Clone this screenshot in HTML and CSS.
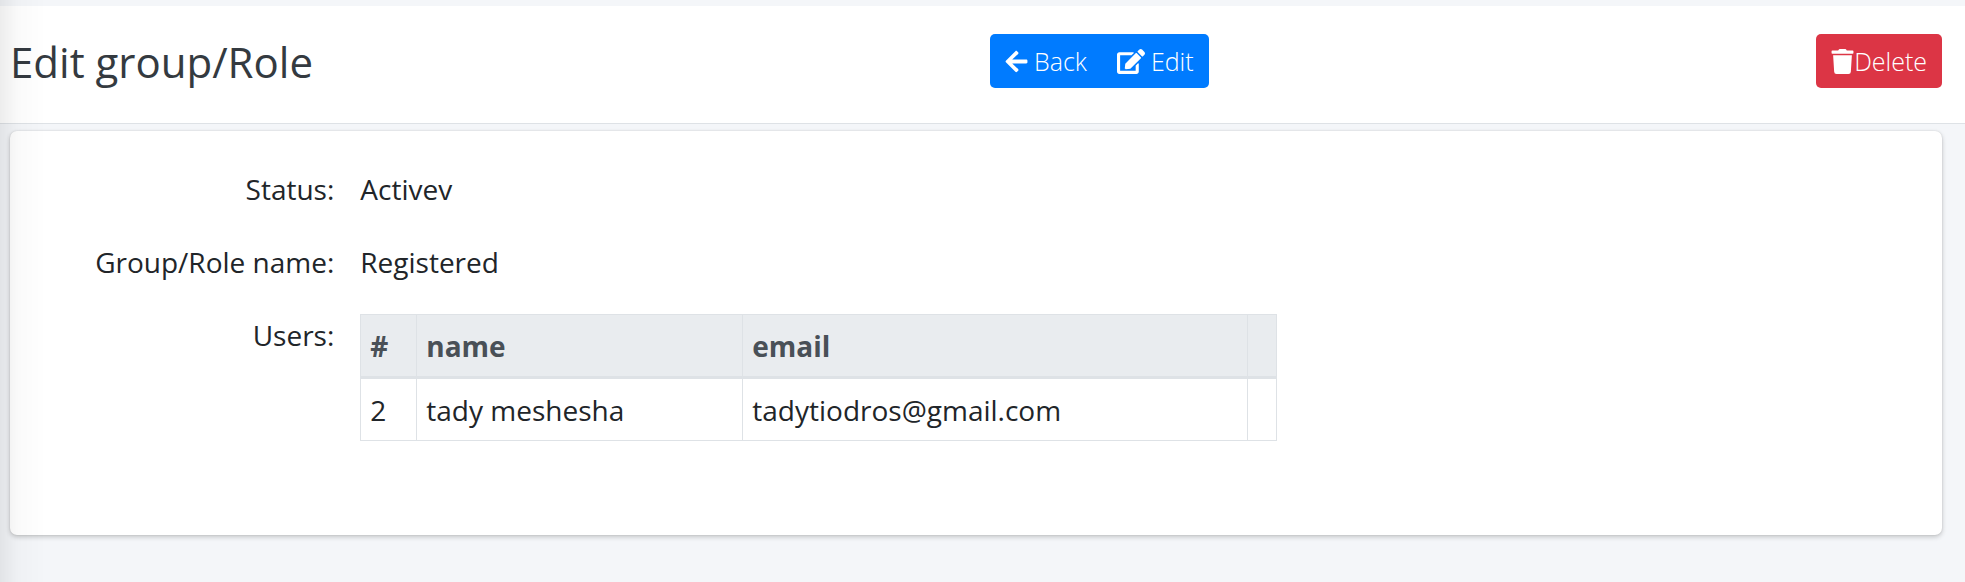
FILE: index.html
```html
<!DOCTYPE html>
<html lang="en">
<head>
<meta charset="utf-8">
<meta name="viewport" content="width=device-width, initial-scale=1">
<title>Edit group/Role</title>
<link rel="stylesheet" href="styles.css">
</head>
<body>
<header class="page-header">
  <h1 class="page-title">Edit group/Role</h1>
  <div class="page-actions">
    <div class="btn-group">
      <button type="button" class="btn btn-primary">
        <svg class="icon icon-arrow" viewBox="0 0 448 512" aria-hidden="true"><path d="M257.500 445.100l-22.200 22.200c-9.400 9.400-24.600 9.400-33.900 0L7 273c-9.400-9.400-9.400-24.600 0-33.900L201.400 44.700c9.400-9.400 24.600-9.400 33.900 0l22.200 22.200c9.500 9.500 9.300 25-.4 34.300L136.600 216H424c13.300 0 24 10.700 24 24v32c0 13.300-10.700 24-24 24H136.600l120.500 114.800c9.800 9.300 10 24.800.4 34.300z"/></svg>
        <span>Back</span>
      </button>
      <button type="button" class="btn btn-primary">
        <svg class="icon icon-edit" viewBox="0 0 576 512" aria-hidden="true"><path d="M402.600 83.200l90.200 90.200c3.800 3.800 3.800 10 0 13.800L274.400 405.600l-92.800 10.300c-12.400 1.400-22.900-9.100-21.500-21.500l10.300-92.800L388.800 83.200c3.800-3.800 10-3.800 13.800 0zm162-22.900l-48.800-48.800c-15.200-15.200-39.900-15.200-55.200 0l-35.400 35.400c-3.800 3.800-3.800 10 0 13.800l90.200 90.200c3.800 3.800 10 3.800 13.800 0l35.400-35.400c15.200-15.300 15.200-40 0-55.200zM384 346.200V448H64V128h229.800c3.200 0 6.200-1.300 8.500-3.500l40-40c7.600-7.600 2.200-20.500-8.500-20.500H48C21.500 64 0 85.500 0 112v352c0 26.500 21.500 48 48 48h352c26.500 0 48-21.500 48-48V306.200c0-10.700-12.900-16-20.500-8.500l-40 40c-2.200 2.300-3.500 5.300-3.500 8.500z"/></svg>
        <span>Edit</span>
      </button>
    </div>
    <button type="button" class="btn btn-danger">
      <svg class="icon icon-trash" viewBox="0 0 448 512" aria-hidden="true"><path d="M432 32H312l-9.400-18.700A24 24 0 0 0 281.100 0H166.800a23.700 23.700 0 0 0-21.400 13.300L136 32H16A16 16 0 0 0 0 48v32a16 16 0 0 0 16 16h416a16 16 0 0 0 16-16V48a16 16 0 0 0-16-16zM32 128l21.200 339a48 48 0 0 0 47.900 45h245.800a48 48 0 0 0 47.900-45L416 128z"/></svg>
      <span>Delete</span>
    </button>
  </div>
</header>
<main class="content">
  <section class="card">
    <dl class="details">
      <dt>Status:</dt>
      <dd>Activev</dd>
      <dt>Group/Role name:</dt>
      <dd>Registered</dd>
      <dt>Users:</dt>
      <dd>
        <table class="users">
          <thead>
            <tr><th class="col-id" scope="col">#</th><th class="col-name" scope="col">name</th><th class="col-email" scope="col">email</th><th></th></tr>
          </thead>
          <tbody>
            <tr><td>2</td><td>tady meshesha</td><td>tadytiodros@gmail.com</td><td></td></tr>
          </tbody>
        </table>
      </dd>
    </dl>
  </section>
</main>
</body>
</html>
```
FILE: styles.css
```css
* {
  box-sizing: border-box;
}

body {
  margin: 0;
  padding-top: 6px;
  background: #f4f6f9;
  color: #212529;
  font-family: "Segoe UI", "Open Sans", "Noto Sans", sans-serif;
  font-size: 28px;
  line-height: 42px;
}

body::before {
  content: "";
  position: fixed;
  z-index: 1;
  top: 0;
  bottom: 0;
  left: 0;
  width: 46px;
  background: linear-gradient(to right, rgba(0, 0, 0, 0.07), rgba(0, 0, 0, 0.02) 40%, rgba(0, 0, 0, 0));
  pointer-events: none;
}

.page-header {
  display: grid;
  grid-template-columns: 1fr 1fr;
  align-items: start;
  padding: 28px 23px 33px 10px;
  border-bottom: 1px solid #dee2e6;
  background: #fff;
}

.page-title {
  margin: 0;
  color: #343a40;
  font-size: 42px;
  font-weight: 400;
  line-height: 56px;
}

.page-actions {
  display: flex;
  justify-content: space-between;
  padding-left: 14px;
}

.btn-group {
  display: flex;
}

.btn {
  display: flex;
  align-items: center;
  padding: 8px 15px;
  border: 0;
  border-radius: 5px;
  color: #fff;
  font-family: inherit;
  font-size: 25px;
  font-weight: 300;
  line-height: 38px;
  cursor: pointer;
}

.btn-primary {
  gap: 6px;
  background: #007bff;
}

.btn-danger {
  background: #dc3545;
}

.btn-group .btn:first-child {
  border-top-right-radius: 0;
  border-bottom-right-radius: 0;
}

.btn-group .btn:last-child {
  border-top-left-radius: 0;
  border-bottom-left-radius: 0;
}

.icon {
  height: 25px;
  fill: currentColor;
}

.icon-arrow,
.icon-trash {
  width: 23px;
}

.icon-edit {
  width: 28px;
}

.content {
  padding: 7px 23px 24px 10px;
}

.card {
  padding: 37px 36px 94px;
  border-radius: 7px;
  background: #fff;
  box-shadow: 0 0 2px rgba(0, 0, 0, 0.13), 0 2px 5px rgba(0, 0, 0, 0.2);
}

.details {
  display: grid;
  grid-template-columns: 15.5% 49.3%;
  gap: 31px 26px;
  margin: 0;
}

.details dt {
  text-align: right;
}

.details dd {
  margin: 0;
}

.users {
  width: 100%;
  border-collapse: collapse;
}

.users th,
.users td {
  padding: 10px 9px 9px;
  border: 1px solid #dee2e6;
  text-align: left;
}

.users thead th {
  border-bottom-width: 3px;
  background: #e9ecef;
  color: #495057;
}

.col-id {
  width: 56px;
}

.col-name {
  width: 326px;
}

.col-email {
  width: 505px;
}
```
